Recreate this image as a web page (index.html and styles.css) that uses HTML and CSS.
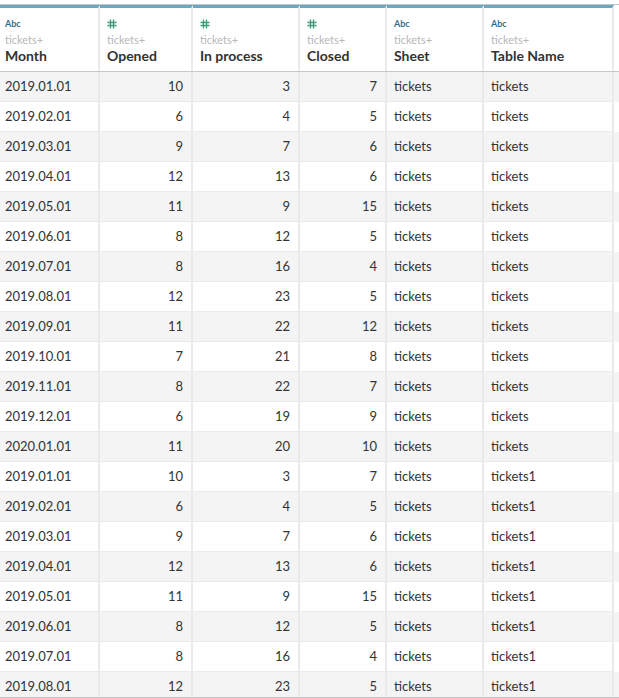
FILE: index.html
```html
<!DOCTYPE html>
<html>
<head>
<meta charset="utf-8">
<link rel="stylesheet" href="styles.css">
</head>
<body>
<div class="frame">
  <div class="grid head">
    <div class="hcell"><div class="type abc">Abc</div><div class="src">tickets+</div><div class="name">Month</div></div>
    <div class="hcell"><div class="type"><svg class="hash" viewBox="0 0 10 10" width="10" height="10"><path d="M3.5 0.5V9.5M6.5 0.5V9.5M0.5 3.5H9.5M0.5 6.5H9.5"/></svg></div><div class="src">tickets+</div><div class="name">Opened</div></div>
    <div class="hcell"><div class="type"><svg class="hash" viewBox="0 0 10 10" width="10" height="10"><path d="M3.5 0.5V9.5M6.5 0.5V9.5M0.5 3.5H9.5M0.5 6.5H9.5"/></svg></div><div class="src">tickets+</div><div class="name">In process</div></div>
    <div class="hcell"><div class="type"><svg class="hash" viewBox="0 0 10 10" width="10" height="10"><path d="M3.5 0.5V9.5M6.5 0.5V9.5M0.5 3.5H9.5M0.5 6.5H9.5"/></svg></div><div class="src">tickets+</div><div class="name">Closed</div></div>
    <div class="hcell"><div class="type abc">Abc</div><div class="src">tickets+</div><div class="name">Sheet</div></div>
    <div class="hcell"><div class="type abc">Abc</div><div class="src">tickets+</div><div class="name">Table Name</div></div>
  </div>
  <div class="body" id="body"></div>
</div>
<script>
var rows = [
["2019.01.01",10,3,7,"tickets","tickets"],
["2019.02.01",6,4,5,"tickets","tickets"],
["2019.03.01",9,7,6,"tickets","tickets"],
["2019.04.01",12,13,6,"tickets","tickets"],
["2019.05.01",11,9,15,"tickets","tickets"],
["2019.06.01",8,12,5,"tickets","tickets"],
["2019.07.01",8,16,4,"tickets","tickets"],
["2019.08.01",12,23,5,"tickets","tickets"],
["2019.09.01",11,22,12,"tickets","tickets"],
["2019.10.01",7,21,8,"tickets","tickets"],
["2019.11.01",8,22,7,"tickets","tickets"],
["2019.12.01",6,19,9,"tickets","tickets"],
["2020.01.01",11,20,10,"tickets","tickets"],
["2019.01.01",10,3,7,"tickets","tickets1"],
["2019.02.01",6,4,5,"tickets","tickets1"],
["2019.03.01",9,7,6,"tickets","tickets1"],
["2019.04.01",12,13,6,"tickets","tickets1"],
["2019.05.01",11,9,15,"tickets","tickets1"],
["2019.06.01",8,12,5,"tickets","tickets1"],
["2019.07.01",8,16,4,"tickets","tickets1"],
["2019.08.01",12,23,5,"tickets","tickets1"]
];
var b = document.getElementById("body");
rows.forEach(function(r, i){
  var row = document.createElement("div");
  row.className = "grid row" + (i % 2 === 0 ? " alt" : "");
  r.forEach(function(v, j){
    var c = document.createElement("div");
    c.className = "cell" + (j === 0 ? " first" : "") + (j >= 1 && j <= 3 ? " numc" : "");
    c.textContent = v;
    row.appendChild(c);
  });
  b.appendChild(row);
});
</script>
</body>
</html>
```
FILE: styles.css
```css
html, body { margin: 0; padding: 0; background: #fff; }
body { font-family: Lato, "Noto Sans", sans-serif; color: #333; }
.frame {
  width: 619px;
  height: 693px;
  overflow: hidden;
  border-bottom: 1px solid #c4c4c4;
  padding-top: 4px;
}
.grid {
  display: grid;
  grid-template-columns: 100px 93px 107px 87px 97px 130px;
}
.head {
  border-top: 1px solid #c4c4c4;
  border-bottom: 1px solid #c8c8c8;
}
.hcell {
  border-top: 3px solid #6aa7c4;
  border-right: 2px solid #eaeaea;
  height: 66px;
  padding-left: 7px;
  box-sizing: border-box;
}
.hcell:first-child { padding-left: 5px; }
.type { font-size: 9px; font-weight: 700; margin-top: 9px; height: 14px; line-height: 14px; display: flex; align-items: center; }
.abc { color: #2f6f8c; }
.hash { stroke: #3b9b74; stroke-width: 1.3; fill: none; display: block; }
.src { font-size: 11px; color: #b8b8b8; margin-top: 2px; line-height: 14px; }
.name { font-size: 14px; font-weight: 700; color: #333; margin-top: 0; line-height: 18px; }
.row { height: 30px; }
.row.alt { background: #f4f4f4; }
.cell {
  font-size: 13px;
  line-height: 29px;
  border-right: 2px solid #eaeaea;
  border-bottom: 1px solid #ebebeb;
  padding-left: 7px;
  color: #333;
}
.cell.first { padding-left: 5px; }
.cell.numc { text-align: right; padding-left: 0; padding-right: 8px; }
```
